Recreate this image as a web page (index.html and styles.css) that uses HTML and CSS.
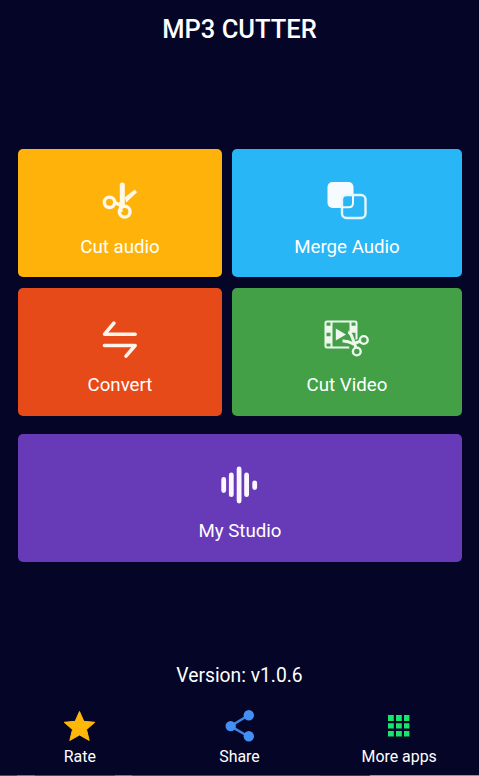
FILE: index.html
```html
<!DOCTYPE html>
<html lang="en">
<head>
<meta charset="utf-8">
<title>MP3 Cutter</title>
<link rel="stylesheet" href="styles.css">
</head>
<body>
<div class="app">
  <h1 class="title"><span>MP3 CUTTER</span></h1>
  <main class="tiles">
    <div class="tile cut">
      <svg class="icon" viewBox="0 0 60 50" fill="none" stroke="#fff9e8" stroke-width="3.4">
        <circle cx="19.5" cy="27.3" r="5.2"/>
        <circle cx="34.7" cy="36.7" r="5.4"/>
        <path d="M32.3 10V29.5" stroke-width="5" stroke-linecap="round"/>
        <path d="M30.8 27V37" stroke-width="3.6"/>
        <path d="M24.5 27.5L30 30"/>
        <path d="M34.8 22.2L44.8 14.4L47 17.2L36.2 27.5Z" fill="#fff9e8" stroke="none"/>
      </svg>
      <span class="label">Cut audio</span>
    </div>
    <div class="tile merge">
      <svg class="icon" viewBox="0 0 60 50">
        <rect x="12.5" y="7" width="26" height="26" rx="5" fill="#f5fbff" transform="translate(-2 0)"/>
        <path d="M25 33V24.5Q25 20 29.5 20H36.5V28.5Q36.5 33 32 33Z" fill="#29b6f6"/>
        <rect x="25" y="20" width="23.5" height="23" rx="4.5" fill="none" stroke="#e6f6ff" stroke-width="2.4"/>
        <path d="M36 20V28Q36 32.3 31.7 32.3H25" fill="none" stroke="#f5fbff" stroke-width="2"/>
      </svg>
      <span class="label">Merge Audio</span>
    </div>
    <div class="tile convert">
      <svg class="icon" viewBox="0 0 60 50" fill="none" stroke="#fff4ec" stroke-width="3.5" stroke-linecap="round" stroke-linejoin="round">
        <path d="M45.2 20.2H14.6L24 9"/>
        <path d="M14.4 31.5H45.2L36 42.2"/>
      </svg>
      <span class="label">Convert</span>
    </div>
    <div class="tile video">
      <svg class="icon" viewBox="0 0 60 50" fill="none" stroke="#edf7ed" stroke-width="2">
        <rect x="8.5" y="7.5" width="31" height="26" rx="1.5"/>
        <path d="M14.5 7.5V33.5M33.5 7.5V23M8.5 12.8H14.5M8.5 17.8H14.5M8.5 23.3H14.5M8.5 28.5H14.5M33.5 12.8H39.5M33.5 17.8H39.5"/>
        <path d="M9 13H14V17.5H9ZM9 23.5H14V28.5H9ZM34 13H39V17.5H34Z" fill="#edf7ed" stroke="none"/>
        <path d="M29 18L38 26L47 23V37H33Z" fill="#43a047" stroke="none"/>
        <path d="M18.8 14.5V26.5L29 20.5Z" fill="#edf7ed" stroke="none"/>
        <path d="M31.2 18Q33 18.5 34.5 21.5L39.2 34.2" stroke-width="3"/>
        <path d="M25.5 27Q31 26.8 36 29.8L43.8 27" stroke-width="3"/>
        <circle cx="39.8" cy="37.5" r="3.9" stroke-width="2.4"/>
        <circle cx="46.8" cy="26" r="3.9" stroke-width="2.4"/>
      </svg>
      <span class="label">Cut Video</span>
    </div>
    <div class="tile studio">
      <svg class="icon" viewBox="0 0 60 50" fill="none" stroke="#fbf6ff" stroke-width="4.8" stroke-linecap="round">
        <path d="M13.7 19.5V30.5M21.3 15V34.7M29.1 9V41M36.6 15V34.7M44.7 22.8V27.6"/>
      </svg>
      <span class="label">My Studio</span>
    </div>
  </main>
  <p class="version"><span>Version: v1.0.6</span></p>
  <nav class="nav">
    <div class="nav-item">
      <svg class="nav-icon" viewBox="0 0 40 36">
        <path d="M19.5 3.5L23.8 13.3L34.8 14.3L26.5 21.6L29.2 32.4L19.5 27L9.8 32.4L12.5 21.6L4.2 14.3L15.2 13.3Z" fill="#ffb80a" stroke="#ffb80a" stroke-width="1" stroke-linejoin="round"/>
      </svg>
      <span class="nav-label">Rate</span>
    </div>
    <div class="nav-item">
      <svg class="nav-icon" viewBox="0 0 40 36">
        <path d="M28.5 7.3L10.5 18.2L28.5 28.5" fill="none" stroke="#4082df" stroke-width="2.5"/>
        <g fill="#4290f5"><circle cx="28.8" cy="7.3" r="5.2"/><circle cx="10.7" cy="18.1" r="5.2"/><circle cx="28.8" cy="28.3" r="5.2"/></g>
      </svg>
      <span class="nav-label">Share</span>
    </div>
    <div class="nav-item">
      <svg class="nav-icon" viewBox="0 0 40 36">
        <path d="M9 7h5.8v6H9zM17 7h5.8v6H17zM25 7h5.4v6H25zM9 15.2h5.8v5.4H9zM17 15.2h5.8v5.4H17zM25 15.2h5.4v5.4H25zM9 23h5.8v5.6H9zM17 23h5.8v5.6H17zM25 23h5.4v5.6H25z" fill="#16e66c"/>
      </svg>
      <span class="nav-label">More apps</span>
    </div>
  </nav>
  <div class="edge"></div>
</div>
</body>
</html>
```
FILE: styles.css
```css
* { box-sizing: border-box; }
body {
  margin: 0;
  background: #050528;
  color: #fff;
  font-family: Roboto, "Liberation Sans", sans-serif;
}
.app {
  display: flex;
  flex-direction: column;
  width: 479px;
  height: 776px;
  overflow: hidden;
}
.title {
  margin: 0;
  height: 149px;
  padding-top: 14px;
  text-align: center;
  font-size: 25.5px;
  font-weight: 500;
  line-height: 30px;
}
.tiles {
  display: grid;
  grid-template-columns: 204px 230px;
  grid-template-rows: 128px 128px 128px;
  gap: 11px 10px;
  padding-left: 18px;
}
.tile {
  display: flex;
  flex-direction: column;
  align-items: center;
  padding-top: 26px;
  border-radius: 5px;
}
.icon { width: 60px; height: 50px; }
.label {
  margin-top: 10px;
  font-size: 18.7px;
  line-height: 24px;
  white-space: nowrap;
}
.cut { background: #ffb30a; }
.merge { background: #29b6f6; }
.convert { background: #e64a19; }
.video { background: #43a047; }
.convert .label,
.video .label,
.studio .label { margin-top: 9px; }
.studio {
  grid-column: 1 / 3;
  margin-top: 7px;
  height: 128px;
  background: #673ab7;
}
.version {
  margin: 108px 0 0;
  text-align: center;
  font-size: 19.3px;
  line-height: 26px;
}
.nav {
  display: flex;
  margin-top: 19px;
}
.nav-item {
  flex: 1;
  display: flex;
  flex-direction: column;
  align-items: center;
}
.nav-icon { width: 40px; height: 36px; }
.nav-label {
  margin-top: 3px;
  font-size: 15.9px;
  line-height: 20px;
}
.edge {
  height: 1px;
  margin-top: auto;
  background: linear-gradient(90deg, #554080 17px, #9b7035 17px 35px, #554080 35px 115px, #9b7035 115px 132px, #554080 132px 320px, #343b70 320px 370px, #a08c9c 370px);
}
```
